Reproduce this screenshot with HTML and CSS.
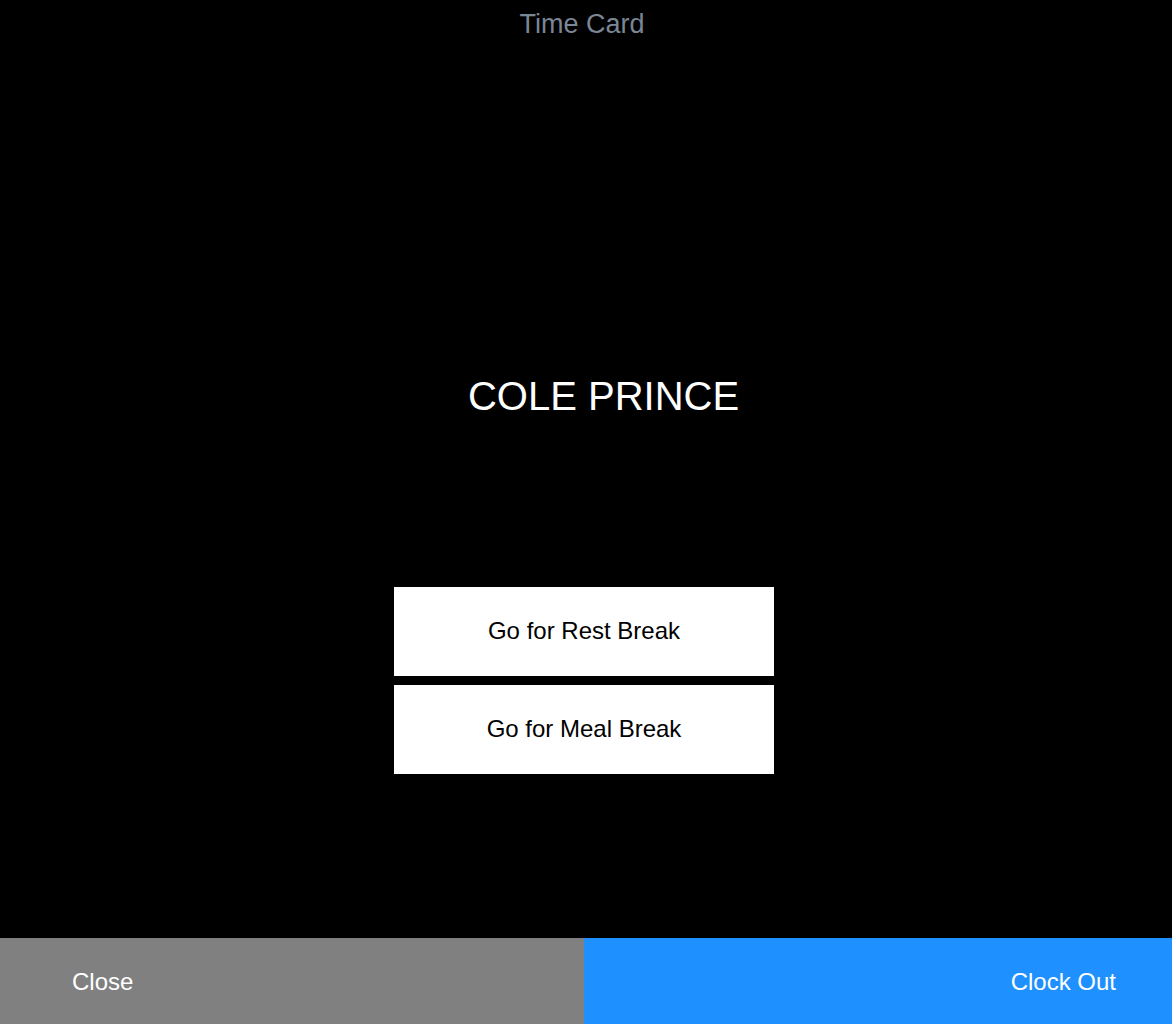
FILE: index.html
```html
<!DOCTYPE html>
<html>
<head>
<meta charset="utf-8">
<link rel="stylesheet" href="styles.css">
</head>
<body>
<div class="screen">
  <header class="title">Time Card</header>
  <div class="name">COLE PRINCE</div>
  <div class="actions">
    <button class="action">Go for Rest Break</button>
    <button class="action">Go for Meal Break</button>
  </div>
  <footer class="footer">
    <button class="close">Close</button>
    <button class="clockout">Clock Out</button>
  </footer>
</div>
</body>
</html>
```
FILE: styles.css
```css
html, body {
  margin: 0;
  padding: 0;
  background: #000;
}
.screen {
  height: 1024px;
  display: flex;
  flex-direction: column;
  font-family: "Liberation Sans", Arial, sans-serif;
}
.title {
  padding-top: 9px;
  padding-right: 8px;
  font-size: 27px;
  line-height: 30px;
  color: #7a8694;
  text-align: center;
}
.name {
  margin-top: 334px;
  padding-left: 35px;
  font-size: 40px;
  line-height: 46px;
  color: #fff;
  text-align: center;
}
.actions {
  margin-top: 168px;
  padding-right: 4px;
  display: flex;
  flex-direction: column;
  align-items: center;
  gap: 9px;
}
.action {
  width: 380px;
  height: 89px;
  border: 0;
  background: #fff;
  color: #000;
  font-family: "Liberation Sans", Arial, sans-serif;
  font-size: 24px;
  padding: 0 0 2px 0;
}
.footer {
  margin-top: auto;
  height: 86px;
  display: flex;
}
.footer button {
  border: 0;
  color: #fff;
  font-family: "Liberation Sans", Arial, sans-serif;
  font-size: 24px;
  height: 86px;
}
.close {
  width: 584px;
  background: #808080;
  text-align: left;
  padding: 2px 0 0 72px;
}
.clockout {
  flex: 1;
  background: #1e90ff;
  text-align: right;
  padding: 2px 56px 0 0;
}
```
